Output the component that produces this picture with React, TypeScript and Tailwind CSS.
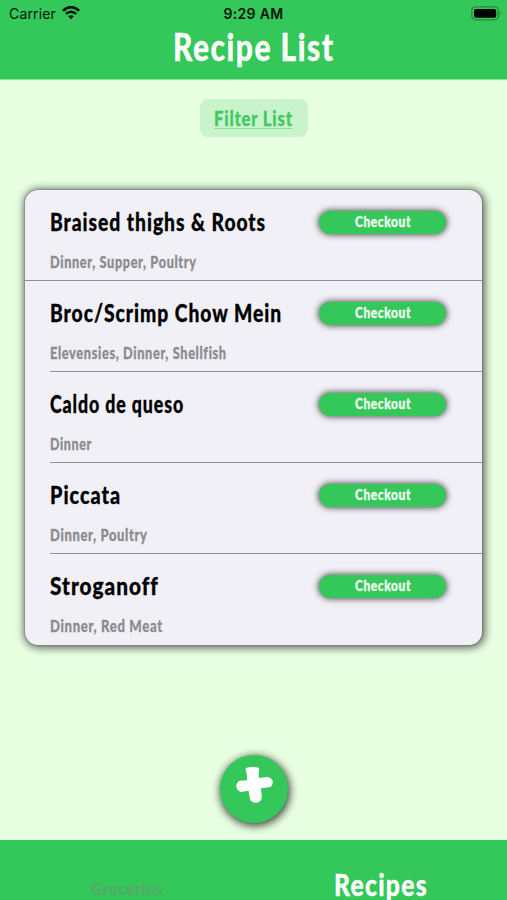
import { useLayoutEffect, useRef, useState } from "react";
import clsx from "clsx";

const recipes = [
  { name: "Braised thighs & Roots", nameWidth: 216, tags: "Dinner, Supper, Poultry", tagsWidth: 147 },
  { name: "Broc/Scrimp Chow Mein", nameWidth: 232, tags: "Elevensies, Dinner, Shellfish", tagsWidth: 177 },
  { name: "Caldo de queso", nameWidth: 134, tags: "Dinner", tagsWidth: 42 },
  { name: "Piccata", nameWidth: 71, tags: "Dinner, Poultry", tagsWidth: 98 },
  { name: "Stroganoff", nameWidth: 109, tags: "Dinner, Red Meat", tagsWidth: 113 },
];

// Condenses the lettering so that a label takes exactly the given width
function Marker({ text, width, className }: { text: string; width: number; className?: string }) {
  const ref = useRef<HTMLSpanElement>(null);
  const [scale, setScale] = useState(1);

  useLayoutEffect(() => {
    if (ref.current) setScale(width / ref.current.offsetWidth);
  }, [text, width]);

  return (
    <span className="flex" style={{ width }}>
      <span
        ref={ref}
        className={clsx(
          "shrink-0 origin-left whitespace-nowrap font-['Marker_Felt','Lato',sans-serif] font-black tracking-[0.05em] [-webkit-text-stroke:0.3px_currentColor]",
          className
        )}
        style={{ transform: `scaleX(${scale})` }}
      >
        {text}
      </span>
    </span>
  );
}

function WifiIcon() {
  return (
    <svg viewBox="0 0 18 14" className="mt-[6px] ml-[6px] h-[14px] w-[18px]" fill="none" stroke="#07140a">
      <path d="M.9 4.7Q9-2.3 17.1 4.7" strokeWidth="2.7" />
      <path d="M3.8 7.9Q9 3.5 14.2 7.9" strokeWidth="2.5" />
      <path d="M6.1 10.3Q9 8 11.9 10.3L9 13.3Z" fill="#07140a" stroke="none" />
    </svg>
  );
}

function BatteryIcon() {
  return (
    <svg viewBox="0 0 31 15" className="mt-[5.5px] h-[15px] w-[31px]">
      <rect x=".8" y=".8" width="26.6" height="13" rx="4" fill="none" stroke="#238b3e" strokeWidth="1.3" />
      <rect x="3" y="2.9" width="22.2" height="8.8" rx="2" fill="#000" />
      <path d="M28.6 4.8Q30.8 7.3 28.6 9.8Z" fill="#238b3e" />
    </svg>
  );
}

export default function App() {
  return (
    <div className="flex h-[900px] w-[507px] flex-col overflow-hidden bg-[#e8ffe1]">
      <header className="h-20 shrink-0 border-b border-[#8be29a] bg-[#34c759]">
        <div className="grid h-7 grid-cols-3 font-['Inter',sans-serif] text-[14px] leading-7 text-[#07140a]">
          <div className="flex pl-[9px]">
            <span className="tracking-[0.15px]">Carrier</span>
            <WifiIcon />
          </div>
          <div className="text-center font-semibold tracking-[0.3px]">9:29 AM</div>
          <div className="flex justify-end pr-[5px]">
            <BatteryIcon />
          </div>
        </div>
        <h1 className="flex justify-center">
          <Marker text="Recipe List" width={162} className="text-[37px] leading-[38px] text-white" />
        </h1>
      </header>

      <main className="flex flex-1 flex-col items-center">
        <button className="mt-[19px] flex h-[38px] w-[108px] items-center justify-center rounded-lg bg-[#c9f4cb]">
          <Marker
            text="Filter List"
            width={79}
            className="text-[20px] leading-6 text-[#43c964] underline decoration-[#8bdd9c] decoration-1 underline-offset-2"
          />
        </button>

        <ul className="mt-[53px] h-[455px] w-[457px] rounded-[13px] bg-[#f1f0f6] shadow-[0_0_2px_#555,1px_1px_8px_2px_rgba(0,0,0,0.6)]">
          {recipes.map((recipe, i) => (
            <li key={recipe.name} className="flex h-[91px] flex-col">
              <div className="flex flex-1 justify-between pr-9 pl-[25px]">
                <div>
                  <Marker text={recipe.name} width={recipe.nameWidth} className="mt-4 text-[24px] leading-8 text-black" />
                  <Marker text={recipe.tags} width={recipe.tagsWidth} className="mt-3 text-[16px] leading-6 text-[#8d8c90]" />
                </div>
                <button className="mt-[21px] flex h-[23px] w-[127px] items-center justify-center rounded-full bg-[#34c759] shadow-[0_0_6px_1px_rgba(0,0,0,0.65)]">
                  <Marker text="Checkout" width={56} className="-mt-[2px] text-[14.5px] leading-5 text-[#f2fff3]" />
                </button>
              </div>
              {i < recipes.length - 1 && (
                <div className={clsx("h-px bg-[#8f8f93]", i > 0 && "ml-[25px]")} />
              )}
            </li>
          ))}
        </ul>

        <button className="mt-[110px] flex size-[68px] items-center justify-center rounded-full bg-[#34c759] shadow-[1px_2px_9px_1px_rgba(0,0,0,0.75)]">
          <svg viewBox="0 0 38 38" className="-mt-[9px] h-[38px] w-[38px]" fill="#fff">
            <path d="M10.5 3Q11 1 16.5 1Q23.5 .5 24.3 2.5Q23.3 6 23.9 12L32.5 11Q35.5 11 37.5 14.5Q38.5 19 35.5 21L25.7 22.5Q27 27 26.7 32.5Q25.5 36.5 21 36.8Q16.5 37 15 33L13.5 24.7L6 25.9Q2.2 25 1.3 20.8Q1 17 4.8 14.8L12 14.3Q12.3 8 10.5 3Z" />
          </svg>
        </button>
      </main>

      <nav className="flex h-[60px] shrink-0 bg-[#34c759]">
        <div className="flex w-[254px] justify-center pt-[38px]">
          <Marker text="Groceries" width={72} className="text-[17px] leading-[22px] text-[#55a968]" />
        </div>
        <div className="flex w-[253px] justify-center pt-7">
          <Marker text="Recipes" width={94} className="text-[30px] leading-8 text-white" />
        </div>
      </nav>
    </div>
  );
}
